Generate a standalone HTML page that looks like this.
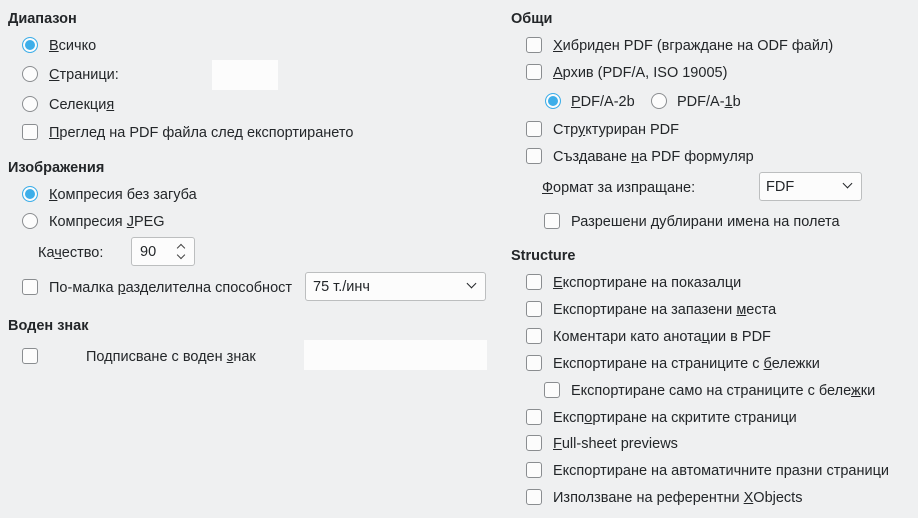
<!DOCTYPE html><html><head><meta charset="utf-8"><style>
body{margin:0;width:918px;height:518px;background:#eff0f1;font-family:"Liberation Sans","DejaVu Sans",sans-serif;font-size:14.5px;color:#232629;position:relative;overflow:hidden}
.t{position:absolute;white-space:nowrap;line-height:18px;transform:translateY(-8px)}
.b{font-weight:bold}
.cb{position:absolute;width:14px;height:14px;border:1px solid #8a8d90;border-radius:3px;background:#fcfcfc;transform:translateY(-8px)}
.rb{position:absolute;width:14px;height:14px;border:1px solid #8a8d90;border-radius:50%;background:#fcfcfc;transform:translateY(-8px)}
.rb.on{border-color:#3daee9;background:#3daee9;box-shadow:inset 0 0 0 2px #fcfcfc}
.box{position:absolute;background:#fcfcfc;border:1px solid #bcbebf;border-radius:3px;box-sizing:border-box}
.w{position:absolute;background:#fcfcfc}
u{text-decoration:underline}
.ch{position:absolute;right:10px;top:7px;width:6px;height:6px;border-right:1px solid #232629;border-bottom:1px solid #232629;transform:rotate(45deg)}
.up{position:absolute;right:10px;width:5px;height:5px;border-left:1px solid #444;border-top:1px solid #444;transform:rotate(45deg)}
.dn{position:absolute;right:10px;width:5px;height:5px;border-right:1px solid #444;border-bottom:1px solid #444;transform:rotate(45deg)}
</style></head><body>
<div class="t b" style="left:8px;top:18px">Диапазон</div>
<div class="rb on" style="left:22px;top:45px"></div><div class="t" style="left:49px;top:45px"><u>В</u>сичко</div>
<div class="rb" style="left:22px;top:74px"></div><div class="t" style="left:49px;top:74px"><u>С</u>траници:</div>
<div class="w" style="left:212px;top:60px;width:66px;height:30px"></div>
<div class="rb" style="left:22px;top:104px"></div><div class="t" style="left:49px;top:104px">Селекци<u>я</u></div>
<div class="cb" style="left:22px;top:132px"></div><div class="t" style="left:49px;top:132px"><u>П</u>реглед на PDF файла след експортирането</div>
<div class="t b" style="left:8px;top:167px">Изображения</div>
<div class="rb on" style="left:22px;top:194px"></div><div class="t" style="left:49px;top:194px"><u>К</u>омпресия без загуба</div>
<div class="rb" style="left:22px;top:221px"></div><div class="t" style="left:49px;top:221px">Компресия <u>J</u>PEG</div>
<div class="t" style="left:38px;top:252px">Ка<u>ч</u>ество:</div>
<div class="box" style="left:131px;top:237px;width:64px;height:29px"><span style="position:absolute;left:8px;top:6px">90</span><div class="up" style="top:7px"></div><div class="dn" style="top:14px"></div></div>
<div class="cb" style="left:22px;top:287px"></div><div class="t" style="left:49px;top:287px">По-малка <u>р</u>азделителна способност</div>
<div class="box" style="left:305px;top:272px;width:181px;height:29px"><span style="position:absolute;left:7px;top:6px">75 т./инч</span><div class="ch"></div></div>
<div class="t b" style="left:8px;top:325px">Воден знак</div>
<div class="cb" style="left:22px;top:356px"></div><div class="t" style="left:86px;top:356px">Подписване с воден <u>з</u>нак</div>
<div class="w" style="left:304px;top:340px;width:183px;height:30px"></div>

<div class="t b" style="left:511px;top:18px">Общи</div>
<div class="cb" style="left:526px;top:45px"></div><div class="t" style="left:553px;top:45px"><u>Х</u>ибриден PDF (вграждане на ODF файл)</div>
<div class="cb" style="left:526px;top:72px"></div><div class="t" style="left:553px;top:72px"><u>А</u>рхив (PDF/A, ISO 19005)</div>
<div class="rb on" style="left:545px;top:101px"></div><div class="t" style="left:571px;top:101px"><u>P</u>DF/A-2b</div>
<div class="rb" style="left:651px;top:101px"></div><div class="t" style="left:677px;top:101px">PDF/A-<u>1</u>b</div>
<div class="cb" style="left:526px;top:129px"></div><div class="t" style="left:553px;top:129px">Стр<u>у</u>ктуриран PDF</div>
<div class="cb" style="left:526px;top:156px"></div><div class="t" style="left:553px;top:156px">Създаване <u>н</u>а PDF формуляр</div>
<div class="t" style="left:542px;top:187px"><u>Ф</u>ормат за изпращане:</div>
<div class="box" style="left:759px;top:172px;width:103px;height:29px"><span style="position:absolute;left:6px;top:6px">FDF</span><div class="ch"></div></div>
<div class="cb" style="left:544px;top:221px"></div><div class="t" style="left:571px;top:221px">Разрешени <u>д</u>ублирани имена на полета</div>
<div class="t b" style="left:511px;top:255px">Structure</div>
<div class="cb" style="left:526px;top:282px"></div><div class="t" style="left:553px;top:282px"><u>Е</u>кспортиране на показалци</div>
<div class="cb" style="left:526px;top:309px"></div><div class="t" style="left:553px;top:309px">Експортиране на запазени <u>м</u>еста</div>
<div class="cb" style="left:526px;top:336px"></div><div class="t" style="left:553px;top:336px">Коментари като анота<u>ц</u>ии в PDF</div>
<div class="cb" style="left:526px;top:363px"></div><div class="t" style="left:553px;top:363px">Експортиране на страниците с <u>б</u>ележки</div>
<div class="cb" style="left:544px;top:390px"></div><div class="t" style="left:571px;top:390px">Експортиране само на страниците с беле<u>ж</u>ки</div>
<div class="cb" style="left:526px;top:417px"></div><div class="t" style="left:553px;top:417px">Експ<u>о</u>ртиране на скритите страници</div>
<div class="cb" style="left:526px;top:443px"></div><div class="t" style="left:553px;top:443px"><u>F</u>ull-sheet previews</div>
<div class="cb" style="left:526px;top:470px"></div><div class="t" style="left:553px;top:470px">Експортиране на автоматичните празни страници</div>
<div class="cb" style="left:526px;top:497px"></div><div class="t" style="left:553px;top:497px">Използване на референтни <u>X</u>Objects</div>
</body></html>
